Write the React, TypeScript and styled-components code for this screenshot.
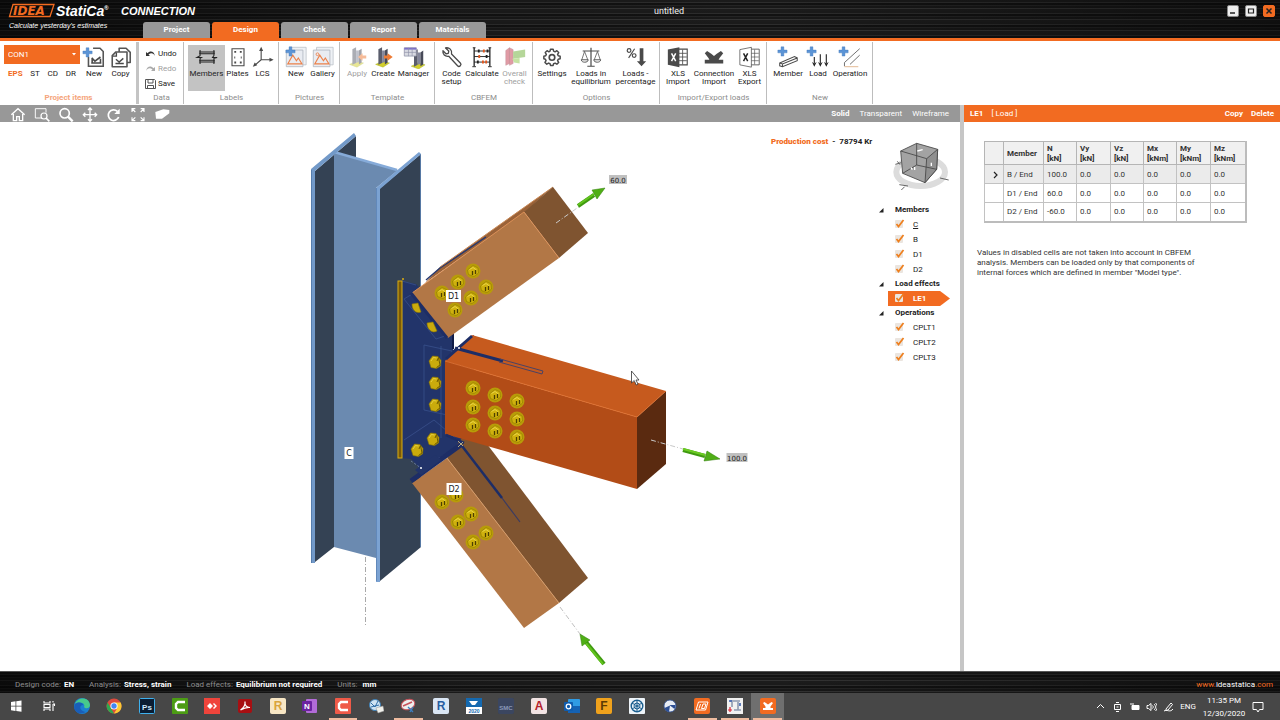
import React from "react";
import styled, { createGlobalStyle, css } from "styled-components";

const ORANGE = "#f26b21";
const GREY = "#989898";

const Global = createGlobalStyle`
  * { box-sizing: border-box; }
  html, body { margin: 0; padding: 0; background: #fff; }
  body { font-family: Roboto, "Open Sans", sans-serif; font-size: 8px; line-height: 10px; color: #222; }
  button, select, input { font: inherit; color: inherit; margin: 0; padding: 0; border: 0; background: none; }
  button { cursor: pointer; white-space: nowrap; }
  svg { display: block; flex: none; }
`;

const brushed = css`
  background:
    linear-gradient(90deg, rgba(0,0,0,.6), rgba(0,0,0,.1) 35%, rgba(0,0,0,0) 60%, rgba(0,0,0,.45)),
    repeating-linear-gradient(180deg, #1b1b1b 0 2px, #2d2d2d 2px 3px, #121212 3px 5px, #242424 5px 6px, #181818 6px 8px, #333 8px 9px, #1c1c1c 9px 11px);
`;

const Page = styled.div`
  display: flex;
  flex-direction: column;
  min-height: 100vh;
  overflow: hidden;
`;

/* ---------- header ---------- */
const Header = styled.header`
  ${brushed}
  display: grid;
  grid-template-columns: 143px 1fr auto;
  grid-template-rows: 22px 16px;
  border-bottom: 3px solid ${ORANGE};
`;
const Brand = styled.div`
  grid-row: 1 / 3;
  overflow: visible;
`;
const Title = styled.div`
  color: #eee;
  font-size: 9px;
  line-height: 22px;
  text-align: center;
  padding-right: 32px;
`;
const WindowButtons = styled.div`
  display: flex;
  align-items: center;
  gap: 6px;
  padding-right: 5px;
`;
const WindowButton = styled.button<{ $close?: boolean }>`
  width: 12px;
  height: 12px;
  border: 1px solid ${(p) => (p.$close ? ORANGE : "#8a8a8a")};
  border-radius: 2px;
  background: ${(p) => (p.$close ? ORANGE : "#eee")};
  color: #222;
  display: flex;
  align-items: center;
  justify-content: center;
`;
const Tabs = styled.nav`
  grid-column: 2 / 4;
  display: flex;
  gap: 2px;
`;
const Tab = styled.button<{ $active?: boolean }>`
  width: 67px;
  height: 16px;
  border-radius: 3px 3px 0 0;
  background: ${(p) => (p.$active ? ORANGE : GREY)};
  color: #fff;
  font-weight: 700;
`;

/* ---------- ribbon ---------- */
const Ribbon = styled.section`
  display: flex;
  height: 64px;
  padding: 1px 0;
  background: #fff;
`;
const Group = styled.div<{ $thick?: boolean }>`
  display: flex;
  flex-direction: column;
  padding: 3px 3px 0 4px;
  border-right: ${(p) => (p.$thick ? "3px solid #c4c4c4" : "1px solid #bdbdbd")};
`;
const GroupRow = styled.div`
  display: flex;
  flex: 1;
`;
const Caption = styled.div<{ $accent?: boolean }>`
  text-align: center;
  color: ${(p) => (p.$accent ? "#f5a57c" : "#8c8c8c")};
  font-weight: ${(p) => (p.$accent ? 700 : 400)};
  height: 11px;
`;
const Tool = styled.button<{ $w: number; $on?: boolean; $off?: boolean }>`
  width: ${(p) => p.$w}px;
  height: 46px;
  display: flex;
  flex-direction: column;
  align-items: center;
  gap: 1px;
  line-height: 8px;
  white-space: pre;
  text-align: center;
  background: ${(p) => (p.$on ? "#c3c3c3" : "transparent")};
  color: ${(p) => (p.$off ? "#a0a0a0" : "#222")};
  & > svg { opacity: ${(p) => (p.$off ? 0.5 : 1)}; }
`;
const ProjectPick = styled.div`
  width: 76px;
  display: flex;
  flex-direction: column;
`;
const ComboWrap = styled.div`
  display: grid;
  & > * { grid-area: 1 / 1; }
  & > svg { align-self: center; justify-self: end; margin-right: 3px; pointer-events: none; }
`;
const Combo = styled.select`
  appearance: none;
  height: 19px;
  padding: 0 4px;
  background: ${ORANGE};
  color: #fff;
  border-radius: 0;
`;
const Kinds = styled.div`
  display: flex;
  justify-content: space-between;
  padding: 5px 4px 0;
`;
const Kind = styled.button<{ $on?: boolean }>`
  color: ${(p) => (p.$on ? ORANGE : "#222")};
  font-weight: ${(p) => (p.$on ? 700 : 400)};
`;
const DataList = styled.div`
  width: 37px;
  display: flex;
  flex-direction: column;
  gap: 5px;
  padding: 4px 0 0 2px;
`;
const DataButton = styled.button<{ $off?: boolean }>`
  display: flex;
  align-items: center;
  gap: 2px;
  height: 10px;
  color: ${(p) => (p.$off ? "#a0a0a0" : "#222")};
`;

/* ---------- body ---------- */
const Body = styled.div`
  display: flex;
  flex: 1;
`;
const Main = styled.main`
  flex: 1;
  min-width: 0;
  display: flex;
  flex-direction: column;
`;
const ViewBar = styled.div`
  height: 17px;
  background: ${GREY};
  display: flex;
  align-items: center;
  padding: 0 11px 0 10px;
`;
const ViewTools = styled.div`
  display: flex;
  gap: 8px;
  flex: 1;
`;
const ViewTool = styled.button`
  width: 16px;
  height: 16px;
`;
const ViewModes = styled.div`
  display: flex;
  gap: 10px;
`;
const ViewMode = styled.button<{ $on?: boolean }>`
  color: #fff;
  font-weight: ${(p) => (p.$on ? 700 : 400)};
`;
const Viewport = styled.div`
  flex: 1;
  display: flex;
  min-height: 549px;
  background: #fff;
`;
const Scene = styled.svg`
  flex: 1 1 0;
  min-width: 0;
  height: 100%;
  align-self: stretch;
`;
const Side = styled.aside`
  width: 195px;
  padding-left: 6px;
`;
const SideTop = styled.div`
  display: flex;
  align-items: flex-start;
  padding-top: 15px;
`;
const Cost = styled.div`
  flex: 0 0 119px;
  font-weight: 700;
  color: #222;
  white-space: pre;
  b { color: ${ORANGE}; }
`;
const CubeButton = styled.button`
  padding-top: 4px;
`;
const Tree = styled.div`
  padding: 12px 0 0 108px;
`;
const TreeHead = styled.button`
  display: flex;
  align-items: center;
  gap: 11px;
  height: 14px;
  font-weight: 700;
  color: #222;
`;
const TreeItem = styled.label<{ $on?: boolean }>`
  display: flex;
  align-items: center;
  gap: 9px;
  width: 62px;
  height: 15px;
  margin-left: 9px;
  padding-left: 7px;
  color: ${(p) => (p.$on ? "#fff" : "#222")};
  font-weight: ${(p) => (p.$on ? 700 : 400)};
  background: ${(p) => (p.$on ? ORANGE : "transparent")};
  clip-path: ${(p) => (p.$on ? "polygon(0 0, 84% 0, 100% 50%, 84% 100%, 0 100%)" : "none")};
`;
const Tick = styled.span`
  display: grid;
  width: 9px;
  height: 9px;
  & > * { grid-area: 1 / 1; }
  & > svg { pointer-events: none; overflow: visible; }
`;
const TickInput = styled.input`
  appearance: none;
  width: 8px;
  height: 8px;
  background: #ebe5df;
  border-radius: 1px;
`;

/* ---------- load panel ---------- */
const Panel = styled.aside`
  width: 320px;
  border-left: 4px solid #c6c6c6;
  background: #fff;
`;
const PanelHead = styled.div`
  height: 17px;
  background: ${ORANGE};
  color: #fff;
  display: flex;
  align-items: center;
  gap: 8px;
  padding: 0 6px;
  & > span { flex: 1; }
`;
const PanelAction = styled.button`
  font-weight: 700;
  color: #fff;
`;
const Table = styled.table`
  margin: 19px 0 0 20px;
  border-collapse: collapse;
  table-layout: fixed;
  width: 262px;
  border: 1px solid #a5a5a5;
  border-right: 2px solid #bcbcbc;
  border-bottom: 2px solid #bcbcbc;
`;
const Th = styled.th<{ $w: number }>`
  width: ${(p) => p.$w}px;
  height: 23px;
  padding: 1px 0 0 3px;
  border: 1px solid #b5b5b5;
  background: #f0f0f0;
  text-align: left;
  font-weight: 700;
  white-space: pre;
  color: #333;
`;
const Tr = styled.tr<{ $on?: boolean }>`
  background: ${(p) => (p.$on ? "#ebebeb" : "#fff")};
`;
const Td = styled.td`
  height: 19px;
  padding: 1px 0 0 3px;
  border: 1px solid #c2c2c2;
  white-space: nowrap;
  color: #333;
  & > svg { margin: 0 auto; }
`;
const Note = styled.p`
  margin: 25px 80px 0 13px;
  color: #333;
`;

/* ---------- status bar ---------- */
const Status = styled.footer`
  ${brushed}
  height: 22px;
  display: flex;
  align-items: center;
  gap: 15px;
  padding: 4px 7px 0 15px;
  color: #8d8d8d;
  border-top: 1px solid #555;
  b { color: #fff; margin-left: 1px; }
`;
const Site = styled.a`
  margin-left: auto;
  color: ${ORANGE};
  text-decoration: none;
  span { color: #fff; }
`;

/* ---------- task bar ---------- */
const Taskbar = styled.div`
  height: 27px;
  display: flex;
  background: #474747;
  color: #fff;
`;
const Apps = styled.div`
  display: grid;
  grid-template-columns: repeat(24, 1fr);
  width: 784px;
`;
const AppButton = styled.button<{ $open?: boolean; $active?: boolean }>`
  display: flex;
  align-items: center;
  justify-content: center;
  background: ${(p) => (p.$active ? "#6f6f6f" : "transparent")};
  border-bottom: 2px solid transparent;
  ${(p) => p.$open && css`
    border-image: linear-gradient(90deg, transparent 9%, #eebb9f 9%, #eebb9f 91%, transparent 91%) 1;
  `}
`;
const Tray = styled.div`
  margin-left: auto;
  display: flex;
  align-items: center;
  gap: 6px;
  padding-right: 16px;
`;
const Clock = styled.div`
  width: 44px;
  text-align: center;
  line-height: 13px;
`;

/* ---------- icons ---------- */
const D = "#4a4a4a";
type IcoProps = { children: React.ReactNode; size?: number };
const Ico = ({ children, size = 24 }: IcoProps) => (
  <svg width={size} height={size} viewBox="-1 -1 26 26" fill="none" stroke={D} strokeWidth={1.5} aria-hidden="true">
    {children}
  </svg>
);
const Plus = ({ x = 3, y = 2 }: { x?: number; y?: number }) => (
  <path
    transform={`translate(${x} ${y})`}
    d="M3.5 0h3v3.5H10v3H6.5V10h-3V6.5H0v-3h3.500z"
    fill="#5b94d6"
    stroke="#3d74b5"
    strokeWidth=".4"
  />
);
const Picture = () => (
  <>
    <path d="M5 1.500h18v19H5z" fill="#eef1f5" stroke="#b9bec6" strokeWidth=".8" />
    <path d="M1.500 4.500h18v18h-18z" fill="#e9ecf2" stroke="#aab0ba" strokeWidth=".8" />
    <path d="M3 19.500 8.500 10l4 6 2-3 4 6.500z" stroke="#ec8048" strokeWidth="1.200" />
  </>
);
const Beam = () => (
  <>
    <path d="m4 20 7-3.500 8 2-7 4.500z" fill="#d3cf2c" stroke="#a6b02a" strokeWidth=".5" />
    <path d="M7 3.500 11 1.500v17l-4 2z" fill="#5a5d6c" stroke="none" />
    <path d="M11 5h3v12.500l-3 1z" fill="#83869a" stroke="none" />
    <path d="M14 5l3-2v15l-3 2z" fill="#474a58" stroke="none" />
  </>
);
const Arrow = ({ flip }: { flip?: boolean }) => (
  <path
    d={flip ? "M22 10.500h-4V8l-5 4 5 4v-2.500h4z" : "M13 10.500h4V8l5.500 4-5.500 4v-2.500h-4z"}
    fill="#ee7a33"
    stroke="none"
  />
);

const icons: Record<string, React.ReactNode> = {
  newItem: (
    <>
      <path d="M11 2.500h7.500l3.500 3.500v16H6V12" stroke="#555" strokeWidth="1.700" />
      <path d="M9.500 13 13 16.500 19 12M10 14v4.500h9V14M9 18.500h11" strokeWidth="1.700" />
      <Plus x={0} y={2} />
    </>
  ),
  copy: (
    <>
      <path d="M10 6V2.500h7.500L22 7v11h-3.500M6.500 6.500h12v16H2.500v-12z" stroke="#555" strokeWidth="1.700" strokeLinejoin="round" />
      <path d="M3 11h4V7M6.500 14.500l3.500 3 4.500-4M6 19h9" strokeWidth="1.500" />
    </>
  ),
  members: (
    <>
      <path d="M3.500 6.500h17M3.500 8.500h17M3.500 15.500h17M3.500 17.500h17" stroke="#222" strokeWidth="1.100" />
      <path d="M4.500 4.500v6l-3.500 2h5l-1.500 1v6M19.500 4.500v6l-1.500 2h5l-3.500 1v6" stroke="#222" strokeWidth="1.100" />
    </>
  ),
  plates: (
    <>
      <path d="M5.500 3h13v18.500h-13z" strokeWidth="1.200" />
      <path d="M8 6.500h2M14 6.500h2M8 18h2M14 18h2M8 12.500h1M15 12.500h1" strokeWidth="2" />
    </>
  ),
  lcs: (
    <>
      <path d="M10 4v11h11M10 15l-7 6" strokeWidth="1.200" />
      <path d="m10 1 2.200 4.500H7.800zM23.500 15 19 17.200v-4.400zM1 22.500l2-4.500 2.800 3z" fill={D} stroke="none" />
    </>
  ),
  picNew: (
    <>
      <Picture />
      <Plus x={1} y={1} />
    </>
  ),
  picGallery: (
    <>
      <Picture />
      <circle cx="6" cy="9" r="1.500" stroke="#ec8048" strokeWidth=".9" />
    </>
  ),
  apply: (
    <>
      <Beam />
      <Arrow flip />
    </>
  ),
  create: (
    <>
      <Beam />
      <Arrow />
    </>
  ),
  manager: (
    <>
      <g transform="translate(5 2)">
        <Beam />
      </g>
      <path d="M1.500 2h13v9h-13z" fill="#d8dae2" stroke="#8d90a6" strokeWidth=".8" />
      <path d="M1.500 3h13" stroke="#7c6fc8" strokeWidth="2" />
      <path d="M1.500 7h13M6 2v9M10 2v9" stroke="#8d90a6" strokeWidth=".7" />
    </>
  ),
  wrench: (
    <path
      d="M5 2.200 8.500 5.500 8 8 5.500 8.500 2.200 5.200C1.500 9 4.500 12 8.500 11.200L18 21.500c2 2 5-1 3-3L11.500 8.700C12.500 4.500 9 1.200 5 2.200z"
      strokeWidth="1.400"
      strokeLinejoin="round"
    />
  ),
  abacus: (
    <>
      <path d="M3.500 2v20M20.500 2v20" stroke="#222" strokeWidth="1.400" />
      <path d="M3.500 5.500h17M3.500 11.500h17M3.500 17.500h17M1.500 22.500h4M18.500 22.500h4M2 2h3M19 2h3" stroke="#222" strokeWidth="1" />
      <path d="M7.500 5.500h2M17 5.500h2M16 11.500h2M6.500 17.500h2" stroke="#222" strokeWidth="3.200" />
      <path d="M13 5.500h2M8 11.500h2M12 17.500h2M15.500 17.500h2" stroke="#e2571e" strokeWidth="3.200" />
    </>
  ),
  overall: (
    <>
      <path d="M2 5 6 2v17l-4 2zM6 2l4 2v15l-4 2z" fill="#c23a4e" stroke="#8c2436" strokeWidth=".5" />
      <path d="m10 6 13-2v8l-13 2z" fill="#6eae36" stroke="none" />
      <path d="m9 14 8-1v6l-6-1z" fill="#8ec64a" stroke="none" />
    </>
  ),
  gear: (
    <>
      <path
        d="M10.200 2.500h3.600l.6 2.700 2 .9 2.400-1.500 2.500 2.500-1.500 2.400.9 2 2.600.6v3.400l-2.600.6-.9 2 1.500 2.400-2.500 2.300-2.400-1.400-2 .8-.6 2.300h-3.600l-.6-2.300-2-.8-2.400 1.400-2.500-2.300 1.500-2.400-.9-2L1.200 15.500v-3.400l2.500-.6.9-2-1.500-2.400 2.500-2.500L8 6.100l1.600-.9z"
        strokeWidth="2"
        strokeLinejoin="round"
        transform="translate(2.200 1.500) scale(.8)"
      />
      <circle cx="12" cy="12.500" r="3" strokeWidth="1.800" />
    </>
  ),
  scales: (
    <>
      <path d="M12 2v20M3 5.500h18M8 22h8" strokeWidth="1.300" />
      <path d="M5 6 2 15M5 6l3.500 9M19 6l-3.500 9M19 6l3 9" strokeWidth=".8" />
      <path d="M1.500 15h7.500c0 3.500-7.500 3.500-7.500 0zM15 15h7.500c0 3.500-7.500 3.500-7.500 0z" strokeWidth="1" />
    </>
  ),
  percent: (
    <>
      <circle cx="4.500" cy="5" r="2" strokeWidth="1.300" />
      <circle cx="10" cy="10.500" r="2" strokeWidth="1.300" />
      <path d="m10.500 3-6.500 10" strokeWidth="1.200" />
      <path d="M16 2.500h4v14h3L18 22l-5-5.500h3z" fill={D} stroke="none" />
    </>
  ),
  xls: (
    <>
      <path d="M12 3.500h10v17H12" fill="#fff" strokeWidth="1.200" />
      <path d="M13 8h8.500M13 12h8.500M13 16h8.500M17 4v16" strokeWidth=".9" />
      <path d="M1 4 13.500 1.500v21.500L1 20.500z" fill={D} stroke="none" />
      <path d="m5 8 4.500 8.500M9.500 8 5 16.500" stroke="#fff" strokeWidth="1.600" />
    </>
  ),
  xlsOut: (
    <>
      <path d="M12 3.500h10v17H12" strokeWidth=".9" />
      <path d="M13 8h8.500M13 12h8.500M13 16h8.500M17 4v16" strokeWidth=".7" />
      <path d="M1 4 13.500 1.500v21.500L1 20.500z" fill="#fff" strokeWidth=".8" />
      <path d="m5 8 4.500 8.500M9.500 8 5 16.500" stroke="#222" strokeWidth="1.600" />
    </>
  ),
  connImport: (
    <path
      d="M2 8 4.500 5.500 9 8.500l3 2.500 3-2.500 4.500-3L22 8l-4 5-1 2h5v4H2v-4h5l-1-2z"
      fill={D}
      stroke="none"
    />
  ),
  memberNew: (
    <>
      <path d="m3 18.500 16-7 3 1.500v3L6 22.500 3 21.500zM3 18.500l3 1 16-6.500M6 19.500v3" strokeWidth="1.100" />
      <Plus x={1} y={1} />
    </>
  ),
  loadNew: (
    <>
      <path d="M8 12v7M14.500 9v10M21 9v10" stroke="#222" strokeWidth="1.200" />
      <path d="m5.500 17.500 2.500 5 2.500-5-2.500 1.500zM12 17.500l2.500 5 2.500-5-2.500 1.500zM18.500 17.500l2.500 5 2.500-5-2.500 1.500z" fill="#222" stroke="none" />
      <Plus x={0} y={1} />
    </>
  ),
  operationNew: (
    <>
      <path d="M22.500 3 6 18v4M22.500 10 12 20" stroke="#666" strokeWidth="1" />
      <path d="M6 22.500h15" stroke="#e0b48c" strokeWidth="1" />
      <Plus x={0} y={1} />
    </>
  ),
};

type ToolDef = { icon: string; label: string; w: number; on?: boolean; off?: boolean };
const groups: { name: string; tools: ToolDef[] }[] = [
  { name: "Labels", tools: [
    { icon: "members", label: "Members", w: 37, on: true },
    { icon: "plates", label: "Plates", w: 25 },
    { icon: "lcs", label: "LCS", w: 25 },
  ] },
  { name: "Pictures", tools: [
    { icon: "picNew", label: "New", w: 26 },
    { icon: "picGallery", label: "Gallery", w: 27 },
  ] },
  { name: "Template", tools: [
    { icon: "apply", label: "Apply", w: 26, off: true },
    { icon: "create", label: "Create", w: 26 },
    { icon: "manager", label: "Manager", w: 35 },
  ] },
  { name: "CBFEM", tools: [
    { icon: "wrench", label: "Code\nsetup", w: 25 },
    { icon: "abacus", label: "Calculate", w: 36 },
    { icon: "overall", label: "Overall\ncheck", w: 29, off: true },
  ] },
  { name: "Options", tools: [
    { icon: "gear", label: "Settings", w: 30 },
    { icon: "scales", label: "Loads in\nequilibrium", w: 48 },
    { icon: "percent", label: "Loads -\npercentage", w: 41 },
  ] },
  { name: "Import/Export loads", tools: [
    { icon: "xls", label: "XLS\nImport", w: 28 },
    { icon: "connImport", label: "Connection\nImport", w: 44 },
    { icon: "xlsOut", label: "XLS\nExport", w: 27 },
  ] },
  { name: "New", tools: [
    { icon: "memberNew", label: "Member", w: 34 },
    { icon: "loadNew", label: "Load", w: 26 },
    { icon: "operationNew", label: "Operation", w: 38 },
  ] },
];

const viewIcons: [string, React.ReactNode][] = [
  ["Home", <path d="M2 12 12 3l10 9M5 11v10h5v-6h4v6h5V11" strokeWidth="2" />],
  ["Zoom window", <><path d="M12 17H2V3h16v6" strokeWidth="1.400" /><circle cx="15" cy="14" r="4.500" strokeWidth="1.800" /><path d="m18 17 5 5" strokeWidth="2.500" /></>],
  ["Zoom", <><circle cx="10" cy="10" r="7" strokeWidth="2.500" /><path d="m15 15 7 7" strokeWidth="3.500" /></>],
  ["Pan", <path d="M12 2v20M2 12h20M9 5l3-3 3 3M9 19l3 3 3-3M5 9l-3 3 3 3M19 9l3 3-3 3" strokeWidth="2" />],
  ["Rotate", <><path d="M19 15.500A8 8 0 1 1 17 7" strokeWidth="2.600" /><path d="M20.500 3v8h-8z" fill="#fff" stroke="none" /></>],
  ["Fit", <path d="M3 8V3h5M3 3l5 5M16 3h5v5M21 3l-5 5M3 16v5h5M3 21l5-5M21 16v5h-5M21 21l-5-5" strokeWidth="1.700" />],
  ["Solid view", <path d="m2 8 12-4 9 1v5l-11 8H3z" fill="#fff" stroke="none" />],
];

/* ---------- 3D model ---------- */
const faceBolts = [
  [442, 293], [458, 282], [473, 271], [455, 310], [471, 298], [486, 287],
  [473, 388], [495, 395], [517, 401], [473, 407], [495, 413], [517, 419], [473, 425], [495, 431], [517, 437],
];
const lowBolts = [[442, 502], [456, 495], [458, 522], [471, 514], [473, 542], [486, 533]];
const plateBolts = [[435, 362], [435, 383], [435, 405], [433, 439], [417, 450]];

const Bolt = ({ x, y }: { x: number; y: number }) => (
  <g transform={`translate(${x} ${y})`}>
    <circle r="7.500" fill="#b89c08" />
    <path d="M-5.500-1 0-5.500l5 2.500.5 5L1 5.500l-5.500-2z" fill="#cfb10e" stroke="#8f7800" strokeWidth=".6" />
    <path d="M-3.500-1.500 0-3.500 3.500-1" stroke="#ecd84c" strokeWidth=".9" fill="none" />
    <path d="M-.5 0v4M2.500-1v4" stroke="#4d4000" strokeWidth="1.300" />
  </g>
);
const Hex = ({ x, y }: { x: number; y: number }) => (
  <g transform={`translate(${x} ${y})`}>
    <path d="M-6-1-2.500-6 3-5.500l3 4-.5 5.500L1.500 6.500l-5.500-1z" fill="#caab0c" stroke="#8f7800" strokeWidth=".6" />
    <path d="M3.500-4.500 5 3 1.500 5.500M2-1l1.500-3.500" stroke="#6d5a00" strokeWidth="1" fill="none" />
    <path d="M-4-1-1.500-4.500l3 .5" stroke="#e8d345" strokeWidth=".9" fill="none" />
  </g>
);
const Tag = ({ x, y, w, bg, h = 12, children }: { x: number; y: number; w: number; bg: string; h?: number; children: string }) => (
  <g>
    <rect x={x - w / 2} y={y - h / 2} width={w} height={h} fill={bg} />
    <text x={x} y={y + 3} textAnchor="middle" fontFamily="DejaVu Sans, sans-serif" fontSize={h > 10 ? 8 : 7} fill="#222">
      {children}
    </text>
  </g>
);

const Model = () => (
  <Scene viewBox="0 122 765 549" role="img" aria-label="Connection model">
    <polygon points="315,171 356,136 356,160 334,153 334,547 315,562" fill="#344254" />
    <polygon points="334,152 398,170 376,188 376,558 334,547" fill="#6b8ab0" />
    <path d="M334 152 397 170" stroke="#86abd9" strokeWidth="2.500" />
    <polygon points="311,169 354,133 356,136 315,171 315,563 311,563" fill="#7299c8" />
    <path d="M311.500 170V563" stroke="#4f76a6" strokeWidth=".8" />
    <polygon points="380,188 421,154 421,547 380,581" fill="#344254" />
    <polygon points="376,188 419,152 421,154 380,189 380,582 376,582" fill="#7ba2d2" />
    <path d="M376.500 188V581" stroke="#5a82b4" strokeWidth=".8" />
    <path d="M420.500 154V547" stroke="#5f86b8" strokeWidth=".8" />
    <path d="M365.500 557v70" stroke="#a9a9a9" strokeDasharray="5 2 1 2" />
    <Tag x={349} y={453} w={9} bg="#fff">C</Tag>

    <polygon points="402,281 416,284 440,310 453,333 453,350 474,335 474,440 462,447 420,468 411,459 402,458" fill="#22346a" />
    <path d="M453 333v16" stroke="#101c48" strokeWidth="2" />
    <path d="m404 299 10-6 31 43-9 3zM424 345l28 6v65l-28-6zM404 440l30-20 26 22M441 346v92M402 281l14 4" fill="none" stroke="#38508c" strokeWidth=".8" />
    <path d="m411 461 10 7 40-22" stroke="#8195c0" strokeWidth=".7" strokeDasharray="2 2" fill="none" />
    <rect x="398" y="281" width="4" height="177" fill="#7a5a08" stroke="#dcae10" />
    <circle cx="403" cy="279" r="1" fill="#dcae10" />

    <polygon points="447,458 462,438 487,444 588,578 559,603" fill="#7f5430" />
    <polygon points="412,483 447,458 559,603 524,628" fill="#b27746" />
    <path d="m447 458 112 145" stroke="#d79c68" strokeWidth=".9" />
    <path d="m411 481 51-37" stroke="#1d2d66" strokeWidth="5" />
    <path d="m415 470 6 5 20-15-6-5z" fill="#22346a" />
    <path d="m462 446 40 52" stroke="#1d2d66" strokeWidth="2.500" />
    <path d="m502 498 18 24" stroke="#3a3b62" strokeWidth="1.200" />

    <polygon points="425,283 440,267 553,187 524,213" fill="#9a6238" />
    <path d="m426 280 14-12 46-31" stroke="#28396e" strokeWidth="1.500" fill="none" />
    <path d="m440 267 113-80" stroke="#c98a58" strokeWidth="1" />
    <polygon points="524,212 553,187 588,233 559,258" fill="#7f5430" />
    <polygon points="412,293 524,212 559,258 448,338" fill="#b27746" />
    <path d="m412 293 112-81 35 46" stroke="#e0935a" strokeWidth=".9" fill="none" />
    <path d="m411 293 36 45" stroke="#1d2d66" strokeWidth="3" />
    <path d="m412 304 6-1 3 9c-5 2-9-2-9-8zM427 323l6-1 4 9c-5 3-10-2-10-8z" fill="#caab0c" stroke="#8f7800" strokeWidth=".6" />

    <polygon points="445,361 472,335 666,391 637,417" fill="#c65a1e" />
    <polygon points="445,361 637,417 637,489 445,434" fill="#b24c17" />
    <polygon points="637,417 666,391 666,464 637,489" fill="#5a2a10" />
    <path d="m445 361 192 56 29-26" stroke="#df7130" strokeWidth=".9" fill="none" />
    <path d="m446 359 26-23" stroke="#1d2d66" strokeWidth="3" />
    <path d="m455 348 48 13" stroke="#1d2d66" strokeWidth="3" />
    <path d="m500 359 43 12-1 3-43-12" stroke="#4b4364" strokeWidth="1" fill="none" />
    <path d="m446 435 18 8" stroke="#1d2d66" strokeWidth="2.500" />
    <circle cx="459" cy="348" r="1" fill="#fff" />
    <circle cx="421" cy="468" r="1" fill="#fff" />
    <path d="m458 441 5 5m0-4-5 5" stroke="#d9c98a" strokeWidth=".8" />

    {faceBolts.map(([x, y]) => <Bolt key={`${x}-${y}`} x={x} y={y} />)}
    {lowBolts.map(([x, y]) => <Bolt key={`${x}-${y}`} x={x} y={y} />)}
    {plateBolts.map(([x, y]) => <Hex key={`${x}-${y}`} x={x} y={y} />)}

    <path d="m556 223 24-17" stroke="#c9c9c9" strokeDasharray="5 2 1 2" />
    <path d="m578 206 16-11" stroke="#3f9a10" strokeWidth="4" />
    <path d="m578 205 16-11" stroke="#63c41e" strokeWidth="2" />
    <polygon points="605,188 592,190 597,199" fill="#4fae16" stroke="#2f7d08" strokeWidth=".5" />
    <path d="m651 440 32 9" stroke="#c9c9c9" strokeDasharray="5 2 1 2" />
    <path d="m683 450 22 6" stroke="#3f9a10" strokeWidth="4" />
    <path d="m683 449 22 6" stroke="#6bcb22" strokeWidth="2" />
    <polygon points="720,459 707,451 704,461" fill="#4fae16" stroke="#2f7d08" strokeWidth=".5" />
    <path d="m560 607 20 27" stroke="#c0c0c0" strokeDasharray="5 2 1 2" />
    <path d="m604 664-18-22" stroke="#3f9a10" strokeWidth="4" />
    <path d="m603 664-18-22" stroke="#63c41e" strokeWidth="2" />
    <polygon points="580,634 582,646 590,640" fill="#4fae16" stroke="#2f7d08" strokeWidth=".5" />

    <Tag x={453.500} y={296} w={15} bg="#fff">D1</Tag>
    <Tag x={454} y={489} w={15} bg="#fff">D2</Tag>
    <Tag x={618} y={179.500} w={18} h={9} bg="#c0c0c0">60.0</Tag>
    <Tag x={737} y={457.500} w={21} h={9} bg="#c0c0c0">100.0</Tag>
    <path d="M631.500 371v12l2.700-2.500 2 4.500 1.800-.8-2-4.200h3z" fill="#fff" stroke="#333" strokeWidth=".8" />
  </Scene>
);

const Cube = () => (
  <svg width="60" height="50" viewBox="390 125 180 150" fill="none" stroke="#444" strokeWidth="3">
    <ellipse cx="482" cy="218" rx="73" ry="42" stroke="#dcdcdc" strokeWidth="18" />
    <path d="M422 155 470 132l63 18-3 60-35 40-67-28z" fill="#a3a3a3" strokeWidth="2.500" />
    <path d="m500 178 33-28-3 60-35 40z" fill="#8f8f8f" strokeWidth="2.500" />
    <path d="m422 155 78 23M470 132v65l-42 25M470 197l60 13" strokeWidth="2.500" />
    <path d="m472 155 16-4M453 205l4 6M464 203v9M514 190v10" stroke="#fff" strokeWidth="4" />
    <path d="m412 186 8 10M406 195l18-5M418 256l26 4M434 262l-10 10M540 236l26 6" stroke="#666" />
  </svg>
);

type Item = { name: string; on?: boolean; line?: boolean };
const tree: { head: string; items: Item[] }[] = [
  { head: "Members", items: [{ name: "C", line: true }, { name: "B" }, { name: "D1" }, { name: "D2" }] },
  { head: "Load effects", items: [{ name: "LE1", on: true }] },
  { head: "Operations", items: [{ name: "CPLT1" }, { name: "CPLT2" }, { name: "CPLT3" }] },
];

const columns: [string, number][] = [
  ["", 19], ["Member", 40], ["N\n[kN]", 33], ["Vy\n[kN]", 34], ["Vz\n[kN]", 33],
  ["Mx\n[kNm]", 33], ["My\n[kNm]", 34], ["Mz\n[kNm]", 35],
];
const rows: [string, string][] = [["B / End", "100.0"], ["D1 / End", "60.0"], ["D2 / End", "-60.0"]];

/* ---------- task bar icons ---------- */
const Square = ({ bg, fg, text, edge }: { bg: string; fg: string; text: string; edge?: string }) => (
  <>
    <rect x=".5" y=".5" width="15" height="15" rx="1" fill={bg} stroke={edge ?? bg} />
    <text x="8" y="12" textAnchor="middle" fontFamily="Liberation Sans, sans-serif" fontWeight="700" fontSize={text.length > 2 ? 6 : text.length > 1 ? 8 : 12} fill={fg}>
      {text}
    </text>
  </>
);
const Camtasia = ({ bg }: { bg: string }) => (
  <>
    <rect width="16" height="16" rx="1" fill={bg} />
    <path d="M13 4H6L4 6v4l2 2h7" fill="none" stroke="#fff" strokeWidth="2.400" />
  </>
);
const apps: { name: string; open?: boolean; active?: boolean; icon: React.ReactNode }[] = [
  { name: "Start", icon: <path d="m3 4 4.500-.7v4.400H3zM8.300 3.200 13.500 2.500v5.200H8.300zM3 8.500h4.500v4.400L3 12.200zM8.300 8.500h5.200v5.200l-5.200-.7z" fill="#fff" /> },
  { name: "Task view", icon: <path d="M3 3v2h6V3M3 13v-2h6v2M3 6.500h6v3H3zM12 3v1.500M12 6v7M12 6h1.500v2" fill="none" stroke="#fff" strokeWidth="1.100" /> },
  { name: "Edge", icon: <><circle cx="8" cy="8" r="8" fill="#1c7fd0" /><path d="M1 6C3-1 15-2 16 7c0 4-5 4-6 2 2-4-5-6-9-3z" fill="#47c98c" /><path d="M1 6c4-3 8-1 8 1-4 0-4 6 3 7-8 4-14-2-11-8z" fill="#1a5eb8" /></> },
  { name: "Chrome", icon: <><circle cx="8" cy="8" r="7.500" fill="#dd4b3e" /><path d="M1.500 4.500 6 12l2 3.500A7.500 7.500 0 0 1 1.500 4.500z" fill="#2da94f" /><path d="M8 4.500h6.700A7.500 7.500 0 0 1 8 15.500l3-5z" fill="#fcc934" /><circle cx="8" cy="8" r="3.600" fill="#fff" /><circle cx="8" cy="8" r="2.700" fill="#4285f4" /></> },
  { name: "Photoshop", icon: <Square bg="#0b1d33" edge="#3fb1ee" fg="#cfeaff" text="Ps" /> },
  { name: "Camtasia", icon: <Camtasia bg="#4c9c14" /> },
  { name: "AnyDesk", icon: <><rect width="16" height="16" fill="#ef443b" /><path d="m6 5 3 3-3 3-3-3zM9 6l1-1 3 3-3 3-1-1 2-2z" fill="#fff" /></> },
  { name: "Acrobat", icon: <><rect x="1" y="1" width="14" height="14" rx="2" fill="#a80f12" /><path d="M3.500 12c3-2 5-5 4.500-8.500C7.500 7 9.500 9.500 13 9.500c-4-.5-6 .5-9.500 2.500z" fill="none" stroke="#fff" strokeWidth="1.200" /></> },
  { name: "Revit", icon: <Square bg="#f7e6c4" fg="#d9a43c" text="R" /> },
  { name: "OneNote", icon: <><rect x="4" y="1" width="11" height="14" rx="1" fill="#b26bd8" /><rect x="0" y="3" width="10" height="10" rx="1" fill="#6b22a0" /><text x="5" y="11" textAnchor="middle" fontFamily="Liberation Sans, sans-serif" fontWeight="700" fontSize="8" fill="#fff">N</text></> },
  { name: "Camtasia recorder", open: true, icon: <Camtasia bg="#ef5a48" /> },
  { name: "Scanner", icon: <><circle cx="7" cy="7" r="5.500" fill="#cfe3f2" stroke="#3d7fb5" /><path d="M3 5l4 4 3-6M3 9l8-2" stroke="#2f6da6" fill="none" /><path d="m8 10 7-2 1 5-6 2z" fill="#f2f2ec" stroke="#999" strokeWidth=".5" /></> },
  { name: "Snipping tool", open: true, icon: <><ellipse cx="8" cy="6.500" rx="7" ry="5" fill="#eee" stroke="#c8505a" transform="rotate(-20 8 6.500)" /><path d="m3 8 9-4" stroke="#c8505a" strokeWidth="1.500" /><path d="m8 9 5 5M13 9l-3 5" stroke="#3d7fc0" strokeWidth="1.400" /></> },
  { name: "Revit model", icon: <Square bg="#dbe7f5" fg="#285ca0" text="R" /> },
  { name: "Tekla", icon: <><rect width="16" height="16" fill="#fff" /><path d="M0 0h16v9H0z" fill="#1469b0" /><path d="M3 3h9l-3 4H6z" fill="#fff" /><text x="8" y="15" textAnchor="middle" fontFamily="Liberation Sans, sans-serif" fontWeight="700" fontSize="5" fill="#1469b0">2020</text></> },
  { name: "SMC", icon: <Square bg="#3b4660" fg="#8b98b8" text="SMC" /> },
  { name: "AutoCAD", icon: <Square bg="#f2e4e4" fg="#b3202b" text="A" /> },
  { name: "Outlook", icon: <><rect x="4" y="1" width="12" height="13" rx="1" fill="#2f9be4" /><path d="M4 8h12v7H4z" fill="#1462b4" /><rect x="0" y="4" width="9" height="9" rx="1" fill="#0f5cae" /><circle cx="4.500" cy="8.500" r="2.300" fill="none" stroke="#fff" strokeWidth="1.300" /></> },
  { name: "Fusion", icon: <Square bg="#f0a21c" fg="#5c3a04" text="F" /> },
  { name: "Trimble", icon: <><rect width="16" height="16" rx="1" fill="#eef4f9" /><circle cx="8" cy="8" r="5.800" fill="none" stroke="#1b5f8f" strokeWidth="1.400" /><path d="M8 2v12M3 5l10 6M13 5 3 11M5 8a3 3 0 1 0 6 0 3 3 0 1 0-6 0" stroke="#1b5f8f" fill="none" /></> },
  { name: "Globe", icon: <><circle cx="8" cy="8" r="6" fill="#e8edf5" stroke="#2d4f94" strokeWidth=".8" /><path d="M8 2v5h5.500a6 6 0 0 1-1 4L8 7.500zM2.500 10 8 7.500 7 14a6 6 0 0 1-4.500-4z" fill="#2d4f94" /></> },
  { name: "IDEA StatiCa", open: true, icon: <><rect width="16" height="16" rx="2" fill={ORANGE} /><path d="M4.500 4h9.500L11.500 12H2zM6.500 6 5 10.500M9 6l-1.500 4.500h3L12 6z" fill="none" stroke="#fff" strokeWidth="1" /></> },
  { name: "Checkbot", open: true, icon: <><rect width="16" height="16" fill="#f1f1f1" /><path d="M3 3h10M5 4v5M11 4v8M7 12h7" stroke="#8d99b0" strokeWidth="1.600" fill="none" /><path d="M2 3h3M13 5v3" stroke="#3c62b0" strokeWidth="1.600" /><path d="M3 9v5M1 12h4" stroke="#d23" strokeWidth="1.200" /></> },
  { name: "IDEA Connection", open: true, active: true, icon: <><rect width="16" height="16" rx="2" fill={ORANGE} /><path d="m3 5 1.500-1L8 6.500 11.500 4 13 5l-2.500 3.500V10H13v2H3v-2h2.500V8.500z" fill="#fff" /></> },
];

const trayIcons: React.ReactNode[] = [
  <path d="m2 7 3.500-3.500L9 7" />,
  <path d="M2.500 3.500h6v5h-6zM4 1.500h3M4 10.500h3M4.500 6h2" />,
  <><path d="M3 4.500h7v4H3z" fill="#fff" /><path d="M1 3h4" /></>,
  <path d="M1 4.500h1.500L5 2.500v7L2.500 7.500H1zM6.500 4.500c1 1 1 2 0 3M8 3c2 2 2 4 0 6M9.500 2c2.500 2.500 2.500 5.500 0 8" />,
  <path d="m3 8 5-6 1.500 1.500L5 9 3 9.500zM1 10c3-2 6 2 9-2" />,
];

export default function App() {
  return (
    <Page>
      <Global />
      <Header>
        <Brand>
          <svg width="200" height="38" viewBox="0 0 200 38" overflow="visible" role="img" aria-label="IDEA StatiCa Connection">
            <path d="M13 4.500h41l-4 12H9.500z" fill="none" stroke={ORANGE} strokeWidth="1.300" />
            <g fontFamily="Liberation Sans, sans-serif" fontStyle="italic" fontWeight="700" fill="#fff">
              <text x="13" y="15" fontSize="12" fontFamily="DejaVu Sans, sans-serif" fill={ORANGE}>IDEA</text>
              <text x="56" y="16" fontSize="14">StatiCa</text>
              <text x="104" y="10" fontSize="6">®</text>
              <text x="121" y="15" fontSize="11">CONNECTION</text>
              <text x="9" y="28" fontSize="7" fontWeight="400">Calculate yesterday's estimates</text>
            </g>
          </svg>
        </Brand>
        <Title>untitled</Title>
        <WindowButtons>
          <WindowButton aria-label="Minimize"><svg width="8" height="8"><path d="M1 6h5" stroke="#222" strokeWidth="1.500" /></svg></WindowButton>
          <WindowButton aria-label="Maximize"><svg width="8" height="8"><path d="M1.500 2h5v4h-5z" fill="none" stroke="#222" strokeWidth="1.200" /></svg></WindowButton>
          <WindowButton $close aria-label="Close"><svg width="8" height="8"><path d="m1.500 1.500 5 5m0-5-5 5" stroke="#222" strokeWidth="1.500" /></svg></WindowButton>
        </WindowButtons>
        <Tabs>
          {["Project", "Design", "Check", "Report", "Materials"].map((t) => (
            <Tab key={t} $active={t === "Design"}>{t}</Tab>
          ))}
        </Tabs>
      </Header>

      <Ribbon>
        <Group $thick>
          <GroupRow>
            <ProjectPick>
              <ComboWrap>
                <Combo aria-label="Project item" defaultValue="CON1"><option>CON1</option></Combo>
                <svg width="5" height="3"><path d="M0 0h4L2 2.500z" fill="#fff" /></svg>
              </ComboWrap>
              <Kinds>
                <Kind $on>EPS</Kind><Kind>ST</Kind><Kind>CD</Kind><Kind>DR</Kind>
              </Kinds>
            </ProjectPick>
            <Tool $w={28}><Ico>{icons.newItem}</Ico>New</Tool>
            <Tool $w={25}><Ico>{icons.copy}</Ico>Copy</Tool>
          </GroupRow>
          <Caption $accent>Project items</Caption>
        </Group>
        <Group>
          <GroupRow>
            <DataList>
              <DataButton>
                <svg width="11" height="10"><path d="M1 3v4h4L3.500 5.500C6 3.500 8.500 4 10 7 9 2 5 1.500 2.500 4.300z" fill="#333" /></svg>Undo
              </DataButton>
              <DataButton $off>
                <svg width="11" height="10"><path d="M10 3v4H6l1.500-1.500C5 3.500 2.500 4 1 7 2 2 6 1.500 8.500 4.300z" fill="#aaa" /></svg>Redo
              </DataButton>
              <DataButton>
                <svg width="11" height="10" fill="none" stroke="#555"><path d="M.5.500h9l1 1v8H.5zM3 .5v3.500h5V.5M2.500 9.500v-3h6v3" /></svg>Save
              </DataButton>
            </DataList>
          </GroupRow>
          <Caption>Data</Caption>
        </Group>
        {groups.map((g) => (
          <Group key={g.name}>
            <GroupRow>
              {g.tools.map((t) => (
                <Tool key={t.label} $w={t.w} $on={t.on} $off={t.off}>
                  <Ico>{icons[t.icon]}</Ico>
                  {t.label}
                </Tool>
              ))}
            </GroupRow>
            <Caption>{g.name}</Caption>
          </Group>
        ))}
      </Ribbon>

      <Body>
        <Main>
          <ViewBar>
            <ViewTools>
              {viewIcons.map(([name, art]) => (
                <ViewTool key={name} aria-label={name}>
                  <svg width="16" height="16" viewBox="0 -1 24 24" fill="none" stroke="#fff" overflow="visible">{art}</svg>
                </ViewTool>
              ))}
            </ViewTools>
            <ViewModes>
              <ViewMode $on>Solid</ViewMode><ViewMode>Transparent</ViewMode><ViewMode>Wireframe</ViewMode>
            </ViewModes>
          </ViewBar>
          <Viewport>
            <Model />
            <Side>
              <SideTop>
                <Cost><b>Production cost</b>{"  -  78794 Kr"}</Cost>
                <CubeButton aria-label="View orientation"><Cube /></CubeButton>
              </SideTop>
              <Tree>
                {tree.map((s) => (
                  <div key={s.head}>
                    <TreeHead>
                      <svg width="5" height="5"><path d="M4.500 0v4.500H0z" fill="#222" /></svg>{s.head}
                    </TreeHead>
                    {s.items.map((i) => (
                      <TreeItem key={i.name} $on={i.on}>
                        <Tick>
                          <TickInput type="checkbox" defaultChecked />
                          <svg width="9" height="9"><path d="M1.500 4 3.500 6.500 8.500 0" fill="none" stroke="#ee7f1e" strokeWidth="1.700" /></svg>
                        </Tick>
                        {i.line ? <u>{i.name}</u> : i.name}
                      </TreeItem>
                    ))}
                  </div>
                ))}
              </Tree>
            </Side>
          </Viewport>
        </Main>
        <Panel>
          <PanelHead>
            <b>LE1</b><span>[ Load ]</span>
            <PanelAction>Copy</PanelAction><PanelAction>Delete</PanelAction>
          </PanelHead>
          <Table>
            <thead>
              <tr>{columns.map(([c, w]) => <Th key={c} $w={w}>{c}</Th>)}</tr>
            </thead>
            <tbody>
              {rows.map(([m, n], i) => (
                <Tr key={m} $on={i === 0}>
                  <Td>{i === 0 && <svg width="5" height="8"><path d="m1 1 3 3-3 3" fill="none" stroke="#222" strokeWidth="1.200" /></svg>}</Td>
                  <Td>{m}</Td>
                  <Td>{n}</Td>
                  {[0, 1, 2, 3, 4].map((k) => <Td key={k}>0.0</Td>)}
                </Tr>
              ))}
            </tbody>
          </Table>
          <Note>
            Values in disabled cells are not taken into account in CBFEM analysis. Members can be loaded only by that
            components of internal forces which are defined in member "Model type".
          </Note>
        </Panel>
      </Body>

      <Status>
        <div>Design code: <b>EN</b></div>
        <div>Analysis: <b>Stress, strain</b></div>
        <div>Load effects: <b>Equilibrium not required</b></div>
        <div>Units: <b>&nbsp;mm</b></div>
        <Site href="#site">www.<span>ideastatica</span>.com</Site>
      </Status>

      <Taskbar>
        <Apps>
          {apps.map((a) => (
            <AppButton key={a.name} aria-label={a.name} $open={a.open} $active={a.active}>
              <svg width="16" height="16" viewBox="0 0 16 16">{a.icon}</svg>
            </AppButton>
          ))}
        </Apps>
        <Tray>
          {trayIcons.map((t, i) => (
            <svg key={i} width="11" height="12" fill="none" stroke="#fff">{t}</svg>
          ))}
          <span>ENG</span>
          <Clock>11:35 PM<br />12/30/2020</Clock>
          <svg width="12" height="12" fill="none" stroke="#fff"><path d="M1 1.500h10v7H7.500L6 11 4.500 8.500H1z" /></svg>
        </Tray>
      </Taskbar>
    </Page>
  );
}
